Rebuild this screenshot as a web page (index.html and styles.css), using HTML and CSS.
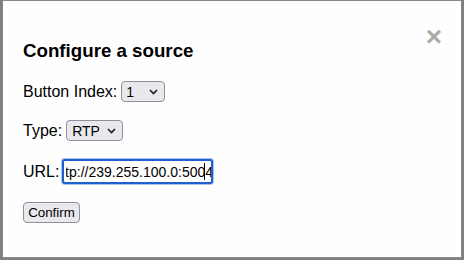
FILE: index.html
```html
<!DOCTYPE html>
<html>

<head>
	<title>Configure a source</title>
	<link rel="stylesheet" href="styles.css">
</head>

<body>
	<div class="modal">
		<span class="close">&times;</span>
		<h3 class="modal-title">Configure a source</h3>

		<div class="field">
			<label for="button-index">Button Index:</label>
			<span class="select-wrap">
				<select id="button-index" class="select-index">
					<option value="1">1</option>
					<option value="2">2</option>
					<option value="3">3</option>
					<option value="4">4</option>
				</select>
				<svg class="chevron" width="9" height="6" viewBox="0 0 9 6">
					<path d="M1 1 L4.5 4.5 L8 1" fill="none" stroke="#1c1b22" stroke-width="1.6" />
				</svg>
			</span>
		</div>

		<div class="field">
			<label for="source-type">Type:</label>
			<span class="select-wrap">
				<select id="source-type" class="select-type">
					<option value="rtp">RTP</option>
					<option value="udp">UDP</option>
				</select>
				<svg class="chevron" width="9" height="6" viewBox="0 0 9 6">
					<path d="M1 1 L4.5 4.5 L8 1" fill="none" stroke="#1c1b22" stroke-width="1.6" />
				</svg>
			</span>
		</div>

		<div class="field">
			<label for="source-url">URL:</label>
			<span class="input-wrap">
				<input type="text" id="source-url" class="url-input" value="rtp://239.255.100.0:5004">
				<span class="caret"></span>
			</span>
		</div>

		<button class="confirm-btn">Confirm</button>
	</div>
</body>

</html>
```

FILE: styles.css
```css
body {
	margin: 0;
	padding: 0 2px 2px 2px;
	background-color: #808080;
	font-family: "Liberation Sans", Arial, sans-serif;
	height: 260px;
	box-sizing: border-box;
	overflow: hidden;
}

.modal {
	background-color: #fefefe;
	border: 1px solid #888;
	padding: 20px;
	height: 258px;
	box-sizing: border-box;
}

.close {
	color: #aaa;
	float: right;
	font-size: 28px;
	font-weight: bold;
	line-height: 32px;
	margin-right: -1px;
	cursor: pointer;
}

.modal-title {
	font-size: 18.72px;
	font-weight: bold;
	margin: 19px 0 20px;
	line-height: 21px;
}

.field {
	display: flex;
	align-items: center;
	font-size: 16px;
	line-height: 18px;
	margin-bottom: 18px;
}

.field label {
	margin-right: 4px;
}

.select-wrap,
.input-wrap {
	position: relative;
	display: flex;
}

select,
.confirm-btn {
	appearance: none;
	font-family: "Liberation Sans", Arial, sans-serif;
	font-size: 13.33px;
	color: #000;
	background-color: #e9e9ed;
	border: 1px solid #8f8f9d;
	border-radius: 4px;
	height: 21px;
	box-sizing: border-box;
	margin: 0;
}

select {
	font-size: 14px;
	padding: 0 0 0 4px;
}

.select-index {
	width: 44px;
}

.select-type {
	width: 57px;
	padding-left: 5px;
}

.chevron {
	position: absolute;
	right: 7px;
	top: 8px;
	pointer-events: none;
}

.url-input {
	font-family: "Liberation Sans", Arial, sans-serif;
	font-size: 14px;
	width: 151px;
	height: 25px;
	box-sizing: border-box;
	margin: 0 0 0 -1px;
	padding: 0 0 0 2px;
	border: 2px solid #1f5fd0;
	border-radius: 3px;
	box-shadow: 0 0 0 1px #a8c2ee;
	outline: none;
	text-indent: -6px;
	color: #000;
	background-color: #fff;
}

.caret {
	position: absolute;
	left: 141px;
	top: 4px;
	width: 1px;
	height: 17px;
	background-color: #000;
}

.confirm-btn {
	width: 57px;
	padding: 0;
	display: block;
	cursor: pointer;
}
```
